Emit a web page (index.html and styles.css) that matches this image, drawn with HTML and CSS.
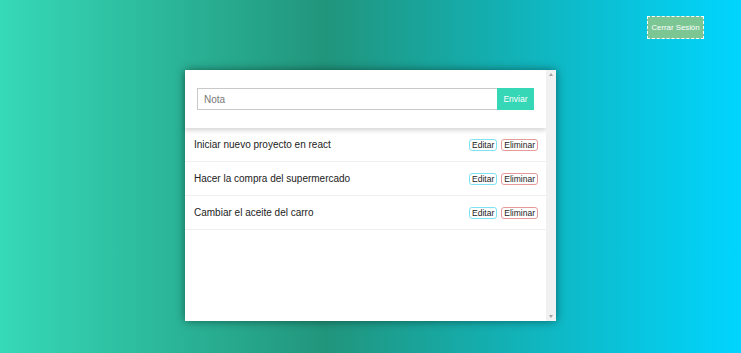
FILE: index.html
```html
<!DOCTYPE html>
<html lang="es">
<head>
<meta charset="utf-8">
<title>Notas</title>
<link rel="stylesheet" href="styles.css">
</head>
<body>
<div class="topbar">
  <button class="logout">Cerrar Sesión</button>
</div>
<main class="card">
  <div class="content">
    <form class="header">
      <input class="note-input" type="text" placeholder="Nota">
      <button class="send" type="button">Enviar</button>
    </form>
    <ul class="list">
      <li class="item"><span>Iniciar nuevo proyecto en react</span><div class="actions"><button class="edit">Editar</button><button class="del">Eliminar</button></div></li>
      <li class="item"><span>Hacer la compra del supermercado</span><div class="actions"><button class="edit">Editar</button><button class="del">Eliminar</button></div></li>
      <li class="item"><span>Cambiar el aceite del carro</span><div class="actions"><button class="edit">Editar</button><button class="del">Eliminar</button></div></li>
    </ul>
  </div>
  <div class="scrollbar">
    <span class="arrow up"></span>
    <span class="arrow down"></span>
  </div>
</main>
</body>
</html>
```
FILE: styles.css
```css
* { box-sizing: border-box; }
html, body { margin: 0; height: 100%; }
body {
  font-family: "Liberation Sans", Arial, sans-serif;
  background: linear-gradient(to right, #36d9b8 0%, #21957c 44%, #00d5ff 100%);
  overflow: hidden;
}
.topbar {
  display: flex;
  justify-content: flex-end;
  padding: 16px 37px 0 0;
  height: 70px;
}
.logout {
  width: 57px;
  height: 23px;
  padding: 0;
  background: #7cc694;
  border: 1px dashed #ffffff;
  color: #ffffff;
  font-family: "Liberation Sans", Arial, sans-serif;
  font-size: 7.8px;
}
.card {
  width: 371px;
  height: 251px;
  margin: 0 0 0 185px;
  background: #ffffff;
  display: flex;
  box-shadow: 0 0 9px rgba(0, 0, 0, 0.45);
}
.content { flex: 1; display: flex; flex-direction: column; }
.header {
  margin: 0;
  height: 58px;
  padding: 18px 12px 0 12px;
  display: flex;
  align-items: flex-start;
  box-shadow: 0 3px 4px rgba(0, 0, 0, 0.14);
}
.note-input {
  flex: 1;
  height: 22px;
  border: 1px solid #c9c9c9;
  border-right: none;
  padding: 0 6px;
  font-family: "Liberation Sans", Arial, sans-serif;
  font-size: 10px;
  color: #555;
  outline: none;
}
.note-input::placeholder { color: #777; }
.send {
  width: 37px;
  height: 22px;
  border: none;
  background: #36d7b6;
  color: #ffffff;
  font-family: "Liberation Sans", Arial, sans-serif;
  font-size: 8.5px;
  padding: 0;
}
.list { list-style: none; margin: 0; padding: 0; }
.item {
  height: 34px;
  display: flex;
  align-items: center;
  justify-content: space-between;
  padding: 0 8px 0 9px;
  border-bottom: 1px solid #f0f0f0;
  font-size: 10px;
  color: #222;
}
.actions { display: flex; gap: 4px; }
.actions button {
  height: 12px;
  padding: 0 2px;
  font-family: "Liberation Sans", Arial, sans-serif;
  font-size: 8.5px;
  line-height: 10px;
  background: #ffffff;
  color: #222;
  border-radius: 3px;
}
.edit { border: 1px solid #7fe3f3; }
.del { border: 1px solid #e79a9a; }
.scrollbar {
  width: 10px;
  background: #f1f1f1;
  display: flex;
  flex-direction: column;
  justify-content: space-between;
  align-items: center;
  padding: 3px 0;
}
.arrow { width: 0; height: 0; border-left: 2.5px solid transparent; border-right: 2.5px solid transparent; }
.arrow.up { border-bottom: 3px solid #a3a3a3; }
.arrow.down { border-top: 3px solid #a3a3a3; }
```
